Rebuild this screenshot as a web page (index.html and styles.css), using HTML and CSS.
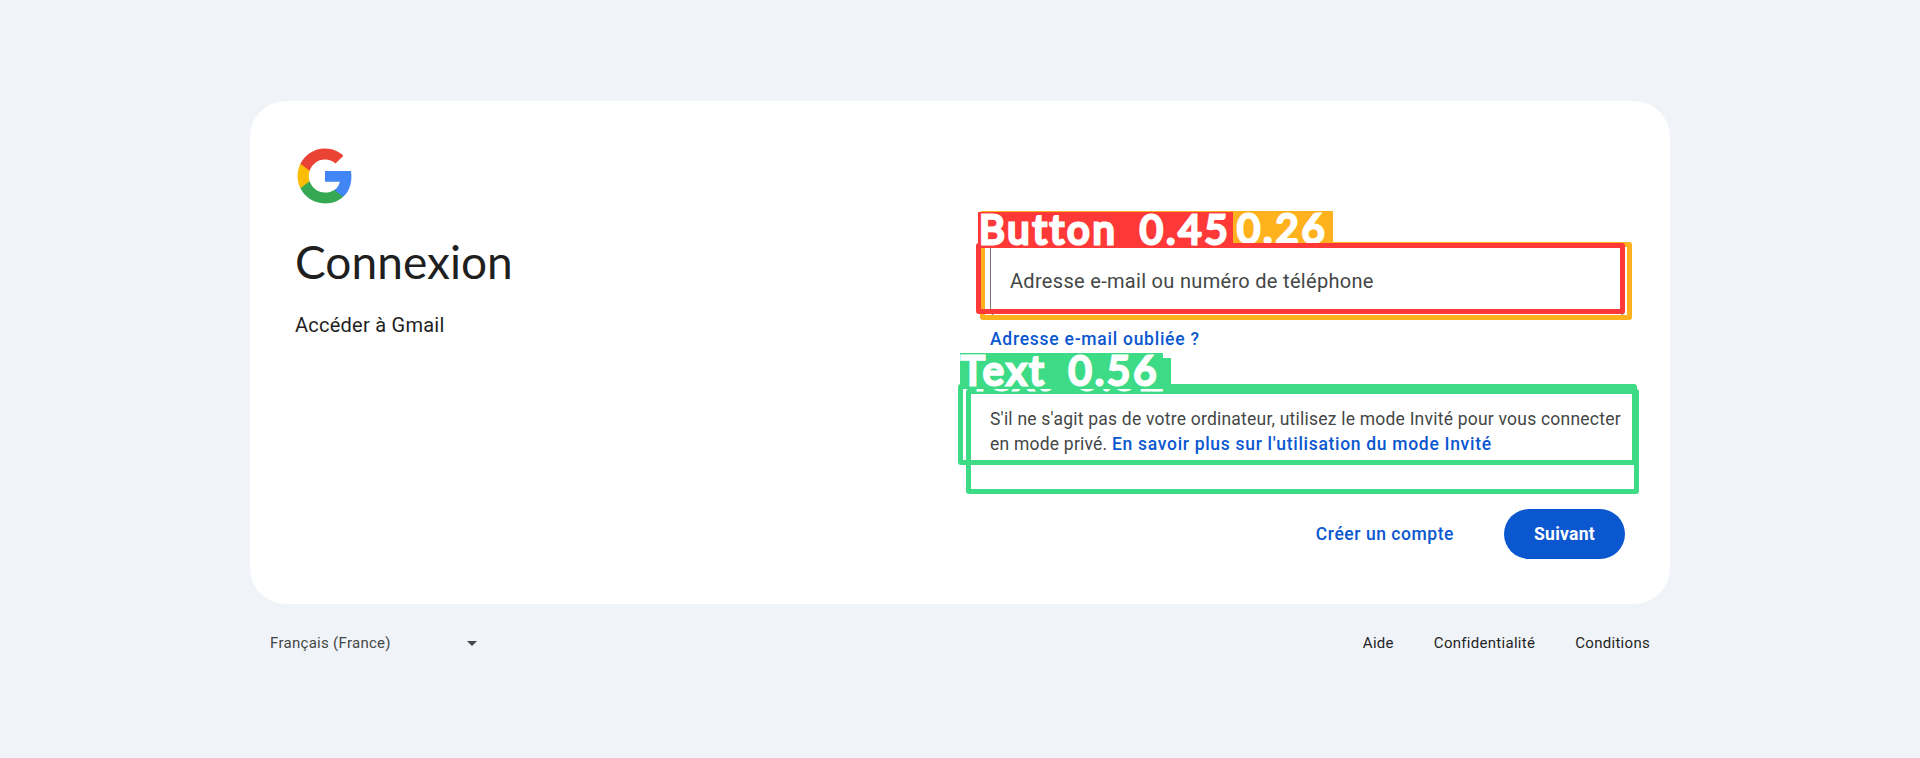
FILE: index.html
```html
<!DOCTYPE html>
<html lang="fr">
<head>
<meta charset="utf-8">
<title>Connexion</title>
<link rel="stylesheet" href="styles.css">
</head>
<body>
<main class="page">
  <section class="card">
    <div class="intro">
      <svg class="logo" viewBox="0 0 48 48" aria-label="Google">
        <path fill="#4285F4" d="M45.12 24.5c0-1.56-.14-3.06-.4-4.5H24v8.51h11.84c-.51 2.75-2.06 5.08-4.39 6.64v5.52h7.11c4.16-3.83 6.56-9.47 6.56-16.17z"/>
        <path fill="#34A853" d="M24 46c5.94 0 10.92-1.97 14.56-5.33l-7.11-5.52c-1.97 1.32-4.49 2.1-7.45 2.1-5.73 0-10.58-3.87-12.31-9.07H4.34v5.7C7.96 41.07 15.4 46 24 46z"/>
        <path fill="#FBBC04" d="M11.69 28.18C11.25 26.86 11 25.45 11 24s.25-2.86.69-4.18v-5.7H4.34C2.85 17.09 2 20.45 2 24c0 3.55.85 6.91 2.34 9.88l7.35-5.7z"/>
        <path fill="#EA4335" d="M24 10.75c3.23 0 6.13 1.11 8.41 3.29l6.31-6.31C34.91 4.18 29.93 2 24 2 15.4 2 7.96 6.93 4.34 14.12l7.35 5.7c1.73-5.2 6.58-9.07 12.31-9.07z"/>
      </svg>
      <h1 class="title"><span>Connexion</span></h1>
      <p class="subtitle"><span>Accéder à Gmail</span></p>
    </div>
    <div class="form">
      <div class="field"><span class="placeholder">Adresse e-mail ou numéro de téléphone</span></div>
      <a class="forgot"><span>Adresse e-mail oubliée ?</span></a>
      <p class="guest"><span class="guest-a">S'il ne s'agit pas de votre ordinateur, utilisez le mode Invité pour vous connecter</span><br><span class="guest-b">en mode privé.</span> <a class="guest-link">En savoir plus sur l'utilisation du mode Invité</a></p>
      <div class="actions">
        <a class="create">Créer un compte</a>
        <button class="next"><span>Suivant</span></button>
      </div>
    </div>
  </section>
  <footer class="footer">
    <div class="language"><span>Français (France)</span><i class="caret"></i></div>
    <nav class="links"><a class="help">Aide</a><a class="privacy">Confidentialité</a><a class="terms">Conditions</a></nav>
  </footer>
</main>

<div class="box box-orange"></div>
<div class="tag tag-orange"><span>0.26</span></div>
<div class="box box-red"></div>
<div class="tag tag-red"><span>Button 0.45</span></div>
<div class="box box-green-low"></div>
<div class="tag tag-green-low"><span>Text 0.52</span></div>
<div class="box box-green"></div>
<div class="tag tag-green"><span>Text 0.56</span></div>
</body>
</html>
```
FILE: styles.css
```css
* { box-sizing: border-box; }
body {
  margin: 0;
  height: 758px;
  overflow: hidden;
  background: #f0f4f9;
  color: #1f1f1f;
  font-family: Roboto, "Liberation Sans", sans-serif;
}
h1, p { margin: 0; font-weight: 400; white-space: nowrap; }
a { color: #0b57d0; font-weight: 500; white-space: nowrap; }

.page { width: 1420px; margin: 0 auto; padding-top: 101px; }
.card {
  display: grid;
  grid-template-columns: 694px 1fr;
  height: 503px;
  padding: 45px;
  border-radius: 36px;
  background: #fff;
}
.logo { display: block; width: 60px; height: 60px; }
.title {
  margin-top: 28px;
  font: 400 46px/56px Lato, sans-serif;
  letter-spacing: 0.05px;
}
.subtitle { margin-top: 20px; font-size: 20px; line-height: 30px; letter-spacing: 0.25px; }

.form { display: flex; flex-direction: column; padding-top: 98px; }
.field {
  display: flex;
  align-items: center;
  flex: none;
  height: 72px;
  margin-left: 1px;
  padding: 2px 19px 0;
  border: 1px solid #747775;
  border-radius: 5px;
  color: #444746;
  font-size: 20px;
  letter-spacing: 0.31px;
}
.forgot { margin-top: 11px; padding-left: 1px; font-size: 17.5px; line-height: 24px; letter-spacing: 0.74px; }
.guest { margin-top: 56px; padding-left: 1px; font-size: 17.5px; line-height: 25px; letter-spacing: 0.22px; color: #444746; }
.guest-link { letter-spacing: 0.69px; }
.actions { display: flex; justify-content: flex-end; align-items: center; gap: 50px; margin-top: 52px; }
.create { font-size: 17.5px; letter-spacing: 0.55px; }
.next {
  width: 121px;
  height: 50px;
  padding: 0;
  border: 0;
  border-radius: 25px;
  background: #0b57d0;
  color: #fff;
  font: 700 17.5px Roboto, sans-serif;
  letter-spacing: 0.28px;
}
.footer {
  display: flex;
  justify-content: space-between;
  padding: 26px 20px 0;
  font-size: 15px;
  line-height: 26px;
  letter-spacing: 0.29px;
}
.language { display: flex; align-items: center; justify-content: space-between; width: 207px; color: #444746; }
.caret { border: 5px solid transparent; border-top-color: #444746; border-bottom: 0; }
.links { display: flex; gap: 40px; }
.links a { color: #1f1f1f; font-weight: 400; }

/* Detection overlays */
.box { position: absolute; border: 5px solid; border-radius: 3px; }
.tag {
  position: absolute;
  color: #fff;
  font: 400 40px/34px Lato, sans-serif;
  letter-spacing: 2.9px;
  word-spacing: 9px;
  white-space: pre;
  -webkit-text-stroke: 3px #fff;
  stroke-linejoin: round;
}
.tag span { display: block; }
.box-orange { left: 980px; top: 242px; width: 652px; height: 78px; border-color: #ffb21d; }
.tag-orange { left: 981px; top: 211px; width: 352px; height: 32px; padding-left: 256px; background: #ffb21d; }
.box-red { left: 976px; top: 243px; width: 649px; height: 71px; border-color: #ff3838; }
.tag-red { left: 978px; top: 212px; width: 255px; height: 33px; padding-left: 1px; background: #ff3838; }
.box-green-low { left: 966px; top: 389px; width: 673px; height: 105px; border-color: #3ddb86; }
.tag-green-low { left: 968px; top: 358px; width: 203px; height: 34px; background: #3ddb86; }
.box-green { left: 958px; top: 384px; width: 679px; height: 81px; border-color: #3ddb86; }
.tag-green { left: 960px; top: 353px; width: 203px; height: 36px; padding-left: 1px; line-height: 35px; background: #3ddb86; }
```
